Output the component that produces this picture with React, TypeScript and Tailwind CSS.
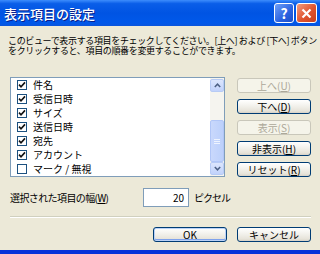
import type { ReactNode } from 'react';

const FONT = "font-['Noto_Sans_CJK_JP','Noto_Sans',sans-serif]";

const ITEMS: { label: string; checked: boolean }[] = [
  { label: '件名', checked: true },
  { label: '受信日時', checked: true },
  { label: 'サイズ', checked: true },
  { label: '送信日時', checked: true },
  { label: '宛先', checked: true },
  { label: 'アカウント', checked: true },
  { label: 'マーク / 無視', checked: false },
];

function Checkbox({ checked }: { checked: boolean }) {
  return (
    <span className="flex h-[10px] w-[10px] shrink-0 items-center justify-center border border-[#1c5180] bg-white">
      {checked && (
        <svg width="8" height="8" viewBox="0 0 8 8">
          <path d="M1 3.6 L3 5.8 L7 1.4" fill="none" stroke="#111" strokeWidth="1.6" />
        </svg>
      )}
    </span>
  );
}

function XpButton({
  children,
  disabled,
  isDefault,
}: {
  children: ReactNode;
  disabled?: boolean;
  isDefault?: boolean;
}) {
  if (disabled) {
    return (
      <div className="flex h-[15px] w-[74px] items-center justify-center rounded-[3px] border border-[#c9c7ba] bg-[#f5f4ea] text-[10px] leading-none text-[#aca899]">
        {children}
      </div>
    );
  }
  return (
    <div
      className={`flex h-[15px] w-[74px] items-center justify-center rounded-[3px] border border-[#003c74] bg-[linear-gradient(180deg,#ffffff_0%,#f4f3ee_40%,#e6e3d9_85%,#d6d0c5_100%)] text-[10px] leading-none text-black ${
        isDefault ? 'shadow-[inset_0_0_0_1px_#b9d1f7,inset_0_-1px_0_1px_#7fa2ec]' : ''
      }`}
    >
      {children}
    </div>
  );
}

function ScrollArrow({ up }: { up: boolean }) {
  return (
    <div className="flex h-[13px] w-[14px] items-center justify-center rounded-[2px] border border-[#b7cbf5] bg-[linear-gradient(180deg,#dce6fd,#c1d2fb)]">
      <svg width="7" height="5" viewBox="0 0 7 5">
        <path
          d={up ? 'M0.8 4 L3.5 1.2 L6.2 4' : 'M0.8 1 L3.5 3.8 L6.2 1'}
          fill="none"
          stroke="#4d6185"
          strokeWidth="1.5"
        />
      </svg>
    </div>
  );
}

function TitleBar() {
  return (
    <div className="flex h-[26px] shrink-0 items-center justify-between bg-[linear-gradient(180deg,#3d8dfc_0%,#0a5ee8_14%,#0054e3_50%,#0058ea_88%,#0b55dc_100%)] pl-[4px] pr-[3px]">
      <span className="text-[13px] font-medium leading-none text-white [text-shadow:1px_1px_0_#0a1f8a]">
        表示項目の設定
      </span>
      <div className="flex gap-[2px]">
        <div className="flex h-[20px] w-[20px] items-center justify-center rounded-[3px] border border-white bg-[linear-gradient(135deg,#6fa0f8,#2a62e0_60%,#1d4fc8)] text-[14px] font-bold leading-none text-white">
          ?
        </div>
        <div className="flex h-[20px] w-[21px] items-center justify-center rounded-[3px] border border-white bg-[linear-gradient(135deg,#f29c80,#e0542f_55%,#c8401f)]">
          <svg width="11" height="11" viewBox="0 0 11 11">
            <path d="M1.5 1.5 L9.5 9.5 M9.5 1.5 L1.5 9.5" stroke="white" strokeWidth="2.2" />
          </svg>
        </div>
      </div>
    </div>
  );
}

export default function App() {
  return (
    <div className={`flex h-[254px] w-[320px] flex-col overflow-hidden bg-[#ece9d8] ${FONT}`}>
      <TitleBar />

      <div className="flex flex-1 flex-col pl-[10px] pr-[9px]">
        <div className="mt-[10px] -ml-[2px] flex flex-col text-[9px] leading-[10px] tracking-[-0.35px] whitespace-pre text-black">
          <span>このビューで表示する項目をチェックしてください。[上へ] および [下へ] ボタン</span>
          <span>をクリックすると、項目の順番を変更することができます。</span>
        </div>

        <div className="mt-[21px] flex gap-[12px]">
          <div className="flex h-[100px] w-[216px] border border-[#7f9db9] bg-white">
            <ul className="flex-1 pl-[6px]">
              {ITEMS.map((item) => (
                <li key={item.label} className="flex h-[14px] items-center gap-[6px] text-[10px] leading-none text-black">
                  <Checkbox checked={item.checked} />
                  <span>{item.label}</span>
                </li>
              ))}
            </ul>
            <div className="flex w-[14px] flex-col bg-[#f5f4ef] py-[1px]">
              <ScrollArrow up />
              <div className="flex-1 pt-[28px]">
                <div className="flex h-[42px] w-[14px] flex-col items-center justify-center gap-[1px] rounded-[2px] border border-[#b1c6f7] bg-[linear-gradient(90deg,#c9d8fc,#bcd0fb)]">
                  <span className="h-px w-[6px] bg-[#eef3fe]" />
                  <span className="h-px w-[6px] bg-[#eef3fe]" />
                  <span className="h-px w-[6px] bg-[#eef3fe]" />
                </div>
              </div>
              <ScrollArrow up={false} />
            </div>
          </div>

          <div className="flex flex-col gap-[6px] pt-[1px]">
            <XpButton disabled>
              上へ(<u>U</u>)
            </XpButton>
            <XpButton>
              下へ(<u>D</u>)
            </XpButton>
            <XpButton disabled>
              表示(<u>S</u>)
            </XpButton>
            <XpButton>
              非表示(<u>H</u>)
            </XpButton>
            <XpButton>
              リセット(<u>R</u>)
            </XpButton>
          </div>
        </div>

        <div className="mt-[11px] flex items-center">
          <span className="w-[133px] text-[10px] leading-none tracking-[-0.6px] text-black">
            選択された項目の幅(<u>W</u>)
          </span>
          <div className="flex h-[19px] w-[46px] items-center justify-end border border-[#7f9db9] bg-white pr-[4px] text-[10px] leading-none text-black">
            20
          </div>
          <span className="ml-[5px] text-[10px] leading-none tracking-[-1px] text-black">ピクセル</span>
        </div>

        <div className="mt-[9px] border-t border-b border-t-[#d0d0bf] border-b-white" />

        <div className="mt-[9px] flex justify-end gap-[10px]">
          <XpButton isDefault>OK</XpButton>
          <XpButton>キャンセル</XpButton>
        </div>
      </div>

      <div className="h-[4px] shrink-0 bg-[#0831d9]" />
    </div>
  );
}
